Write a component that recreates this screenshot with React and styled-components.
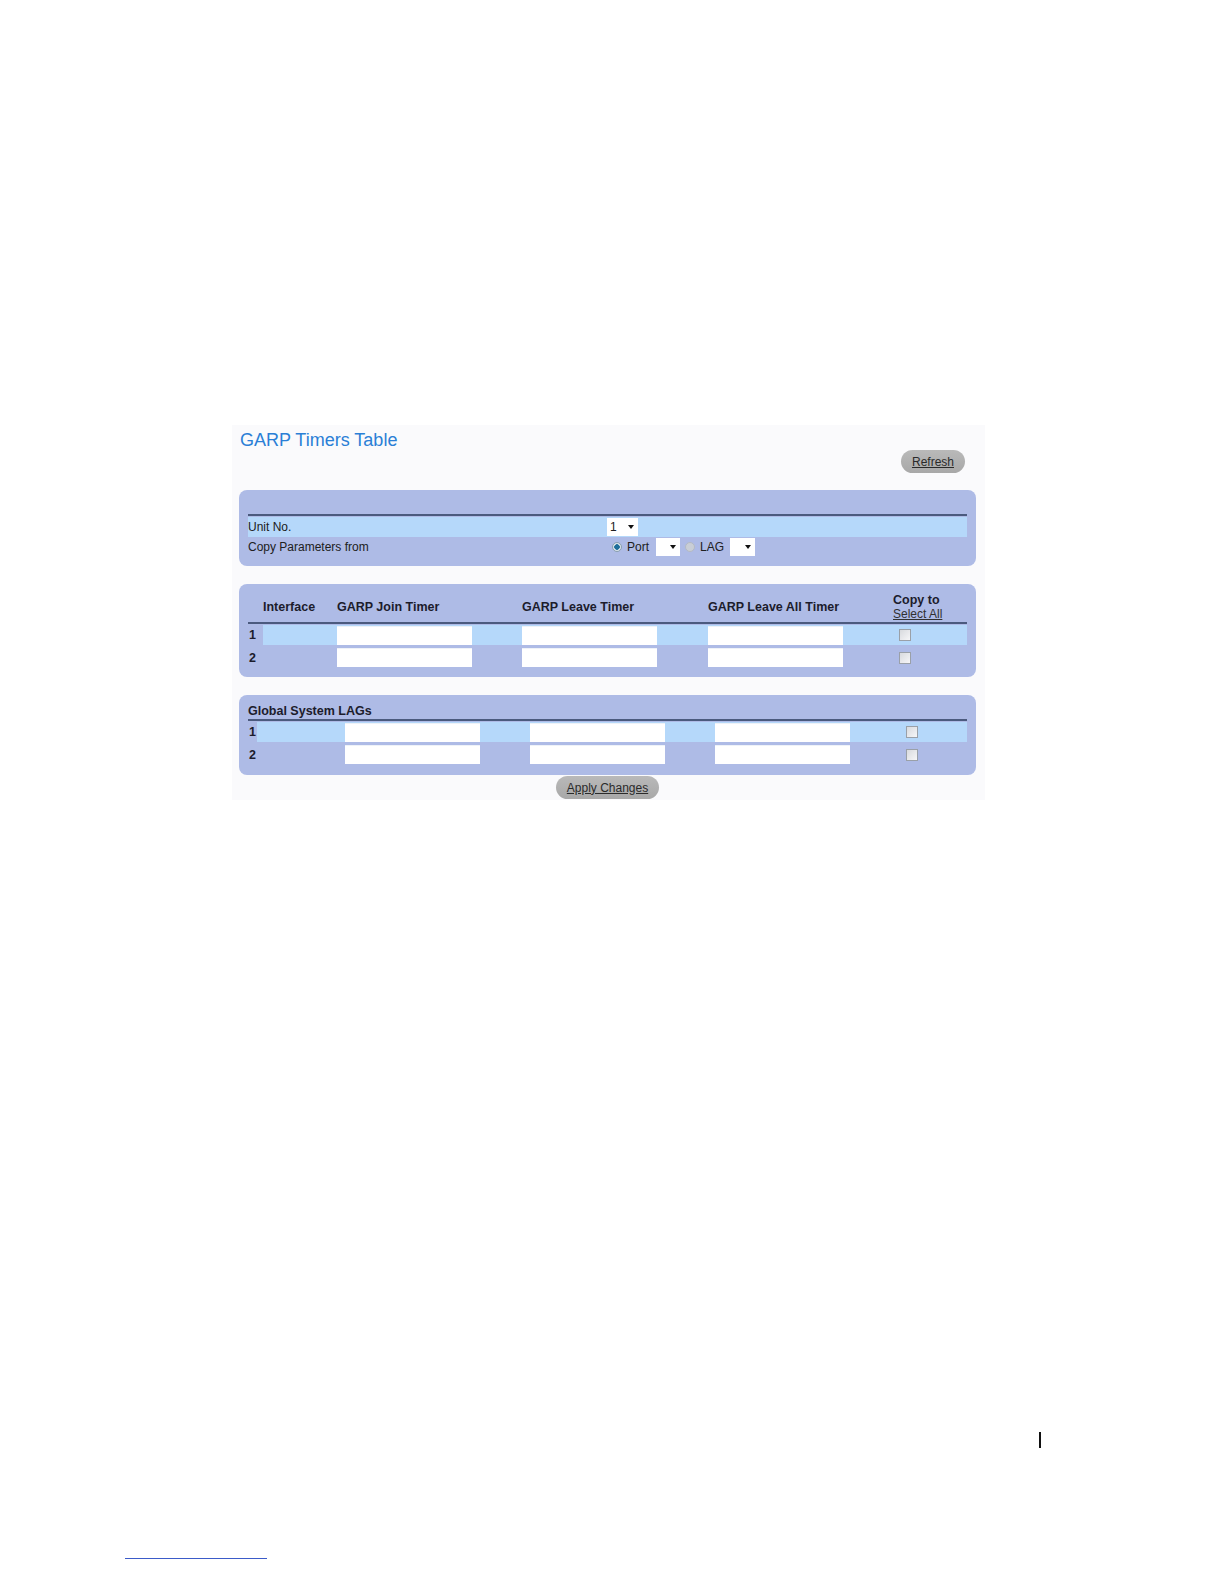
import React from 'react'
import styled, { createGlobalStyle } from 'styled-components'

const GlobalStyle = createGlobalStyle`
  html, body {
    margin: 0;
    overflow: hidden;
  }
  body {
    background: #ffffff;
    font-family: "Liberation Sans", Arial, sans-serif;
  }
`;

const PANEL = '#aebbe6';
const HL = '#b5d8fa';

const Page = styled.div`
  height: 1584px;
  padding-top: 425px;
  box-sizing: border-box;
  overflow: hidden;
`;

const Frame = styled.div`
  margin-left: 232px;
  width: 753px;
  height: 375px;
  box-sizing: border-box;
  padding: 4px 9px 0 7px;
  background: #fafafc;
`;

const Title = styled.h1`
  margin: 0 0 0 1px;
  font-size: 18px;
  font-weight: normal;
  color: #2a7fd6;
  line-height: 22px;
`;

const TopBar = styled.div`
  display: flex;
  justify-content: flex-end;
  padding-right: 11px;
  margin-top: -1px;
`;

const PillButton = styled.button`
  height: 23px;
  padding: 0 11px;
  border: none;
  border-radius: 12px;
  background: linear-gradient(#b9b9b9, #a8a8a8);
  font-family: inherit;
  font-size: 12px;
  color: #2a2a2a;
  text-decoration: underline;
  cursor: pointer;
`;

const Panel = styled.div`
  background: ${PANEL};
  border-radius: 8px;
  padding: ${p => p.$pad || '0 9px 9px'};
  margin-top: ${p => p.$mt || 0}px;
`;

const Rule = styled.div`
  height: 2px;
  background: #4b5a7e;
`;

const Rows = styled.div`
  display: flex;
  flex-direction: column;
  gap: ${p => p.$gap || 0}px;
  padding-top: 1px;
`;

const FormRow = styled.div`
  display: grid;
  grid-template-columns: 359px 1fr;
  align-items: center;
  height: 20px;
  background: ${p => (p.$hl ? HL : 'transparent')};
  font-size: 12px;
  color: #202020;
`;

const Controls = styled.div`
  display: flex;
  align-items: center;
  gap: 4px;
`;

const Select = styled.div`
  display: flex;
  align-items: center;
  justify-content: space-between;
  box-sizing: border-box;
  width: ${p => p.$w}px;
  height: 18px;
  padding: 0 4px 0 3px;
  background: #ffffff;
  font-size: 12px;
  margin-left: ${p => p.$ml || 0}px;
  &::after {
    content: '';
    margin-left: auto;
    border-left: 3.5px solid transparent;
    border-right: 3.5px solid transparent;
    border-top: 4px solid #111;
  }
`;

const Radio = styled.span`
  width: 8px;
  height: 8px;
  border-radius: 50%;
  margin-left: ${p => p.$ml || 0}px;
  background: ${p => (p.$on ? 'radial-gradient(circle, #1e6f9a 0 2.5px, #d9e3ea 3px)' : '#c9ced6')};
  border: 1px solid ${p => (p.$on ? '#8aa0b0' : '#b4bac4')};
`;

const Label = styled.span`
  font-size: 12px;
  color: #202020;
  margin-left: ${p => p.$ml || 0}px;
`;

const Grid = styled.div`
  display: grid;
  grid-template-columns: ${p => p.$cols};
  align-items: center;
  height: ${p => p.$h || 20}px;
  background: ${p => (p.$hl ? HL : 'transparent')};
`;

const HeadGrid = styled.div`
  display: grid;
  grid-template-columns: ${p => p.$cols};
  align-items: end;
  height: 30px;
  font-size: 12.5px;
  font-weight: bold;
  color: #1c1c2c;
`;

const Head = styled.div`
  grid-column: ${p => p.$span};
  padding-left: ${p => p.$pl || 0}px;
  padding-bottom: ${p => p.$pb || 8}px;
  line-height: 14px;
`;

const SelectAll = styled.div`
  font-weight: normal;
  font-size: 12px;
  text-decoration: underline;
  color: #303030;
`;

const Num = styled.div`
  align-self: stretch;
  display: flex;
  align-items: center;
  background: ${PANEL};
  font-size: 12.5px;
  font-weight: bold;
  color: #1c1c2c;
  padding-left: 1px;
`;

const Field = styled.div`
  height: 18px;
  background: #ffffff;
  border-top: 1px solid #eef2f8;
`;

const Cell = styled.div``;

const CheckCell = styled.div`
  display: flex;
  justify-content: center;
  padding-left: ${p => p.$pl || 0}px;
`;

const Check = styled.span`
  width: 10px;
  height: 10px;
  border: 1px solid #9aa0a8;
  background: linear-gradient(135deg, #d8dade, #f6f6f8);
`;

const SectionTitle = styled.div`
  font-size: 12.5px;
  font-weight: bold;
  color: #1c1c2c;
  padding: 10px 0 1px;
  line-height: 13px;
`;

const BottomBar = styled.div`
  display: flex;
  justify-content: center;
  padding-top: 1px;
`;

const PageMark = styled.div`
  margin: 632px 0 0 1039px;
  width: 2px;
  height: 16px;
  background: #111;
`;

const FooterRule = styled.div`
  margin: 110px 0 0 125px;
  width: 142px;
  height: 1px;
  background: #3b5bc9;
`;

const IF_COLS = '15px 74px 135px 50px 135px 51px 135px 124px';
const LAG_COLS = '9px 88px 135px 50px 135px 50px 135px 117px';

const TimerRow = ({ n, cols, hl, checkPad }) => (
  <Grid $cols={cols} $hl={hl} $h={hl ? 20 : 21}>
    <Num>{n}</Num>
    <Cell />
    <Field />
    <Cell />
    <Field />
    <Cell />
    <Field />
    <CheckCell $pl={checkPad}>
      <Check />
    </CheckCell>
  </Grid>
);

export default function App() {
  return (
    <Page>
      <GlobalStyle />
      <Frame>
        <Title>GARP Timers Table</Title>
        <TopBar>
          <PillButton>Refresh</PillButton>
        </TopBar>

        <Panel $mt={17} $pad="24px 9px 9px">
          <Rule />
          <Rows>
            <FormRow $hl>
              <Label>Unit No.</Label>
              <Controls>
                <Select $w={31}>1</Select>
              </Controls>
            </FormRow>
            <FormRow>
              <Label>Copy Parameters from</Label>
              <Controls>
                <Radio $on $ml={5} />
                <Label $ml={1}>Port</Label>
                <Select $w={24} $ml={3} />
                <Radio $ml={1} />
                <Label $ml={1}>LAG</Label>
                <Select $w={25} $ml={2} />
              </Controls>
            </FormRow>
          </Rows>
        </Panel>

        <Panel $mt={18} $pad="8px 9px 9px">
          <HeadGrid $cols={IF_COLS}>
            <Head $span="2">Interface</Head>
            <Head $span="3 / 5">GARP Join Timer</Head>
            <Head $span="5 / 7">GARP Leave Timer</Head>
            <Head $span="7 / 8">GARP Leave All Timer</Head>
            <Head $span="8" $pl={50} $pb={1}>
              Copy to
              <SelectAll>Select All</SelectAll>
            </Head>
          </HeadGrid>
          <Rule />
          <Rows $gap={2}>
            <TimerRow n="1" cols={IF_COLS} hl checkPad={0} />
            <TimerRow n="2" cols={IF_COLS} checkPad={0} />
          </Rows>
        </Panel>

        <Panel $mt={18} $pad="0 9px 10px">
          <SectionTitle>Global System LAGs</SectionTitle>
          <Rule />
          <Rows $gap={2}>
            <TimerRow n="1" cols={LAG_COLS} hl checkPad={6} />
            <TimerRow n="2" cols={LAG_COLS} checkPad={6} />
          </Rows>
        </Panel>

        <BottomBar>
          <PillButton>Apply Changes</PillButton>
        </BottomBar>
      </Frame>
      <PageMark />
      <FooterRule />
    </Page>
  );
}
